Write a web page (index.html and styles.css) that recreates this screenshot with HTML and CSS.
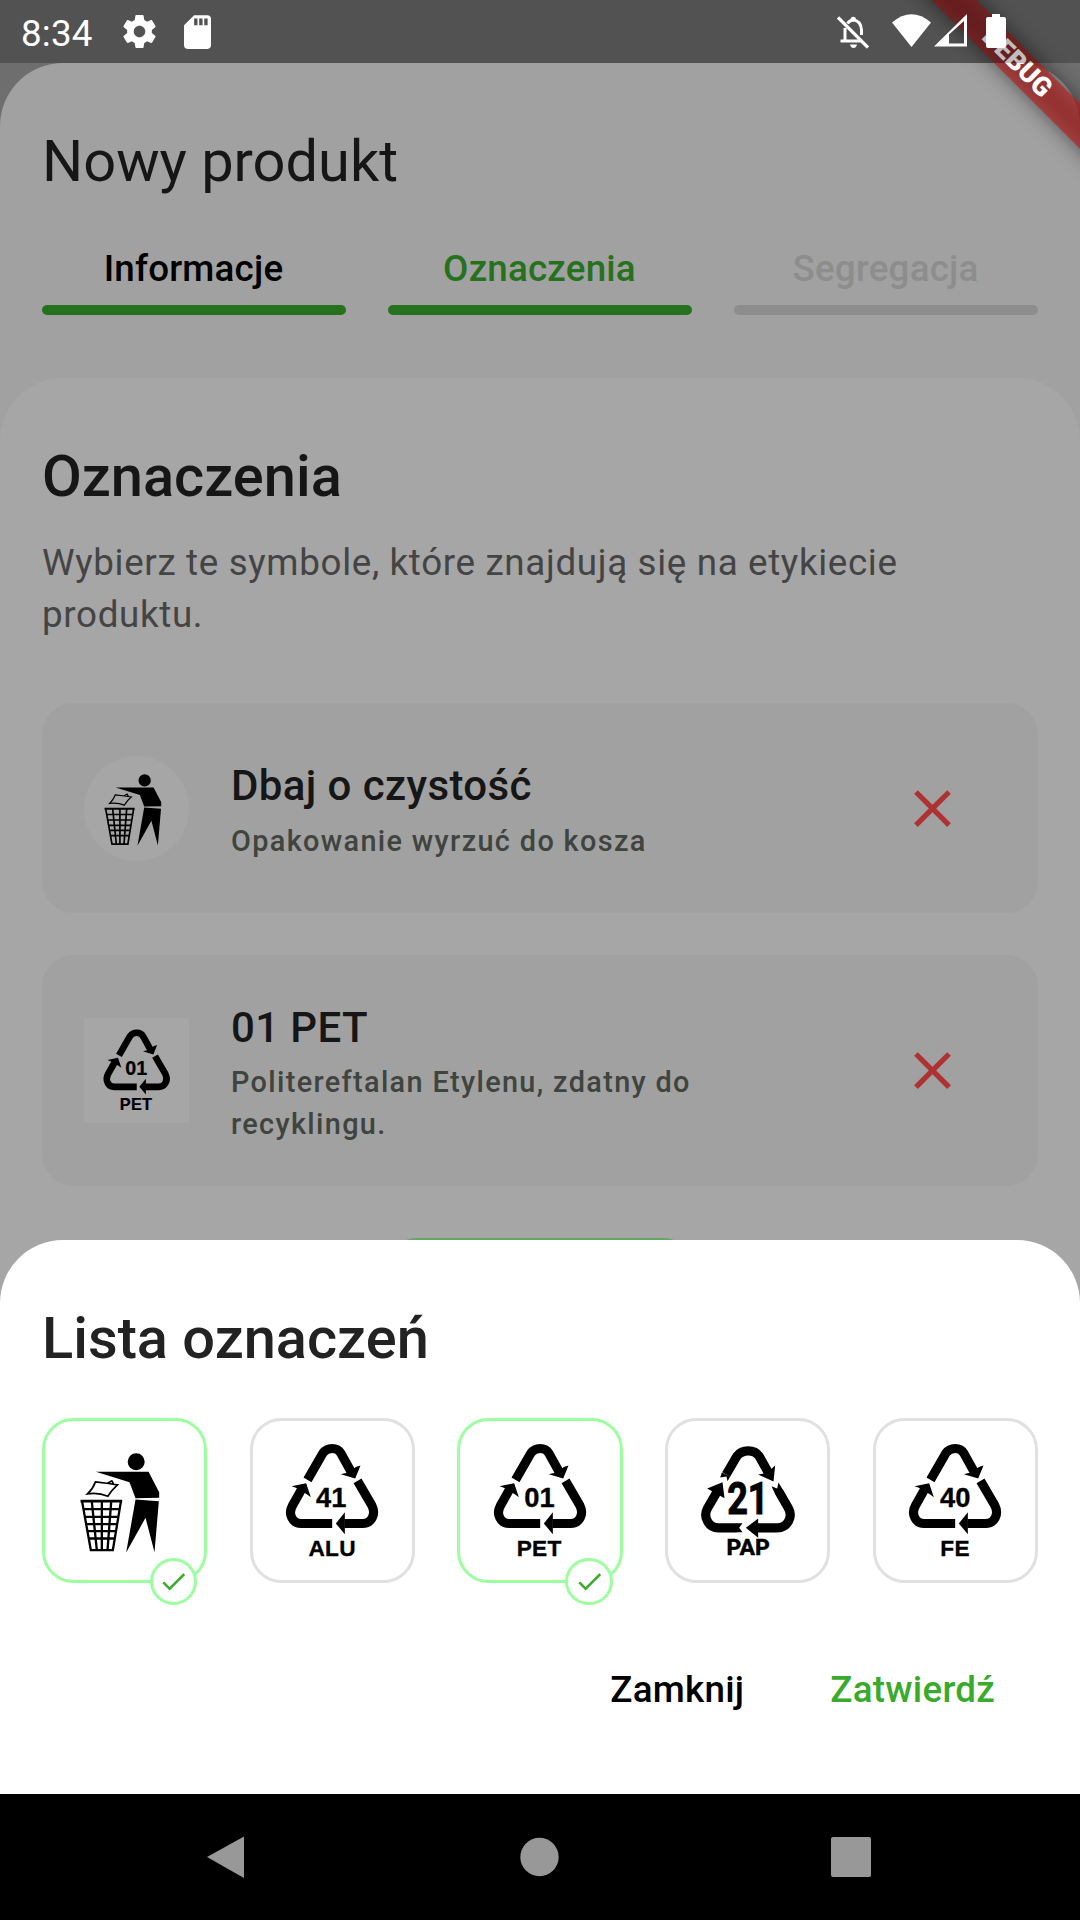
FILE: index.html
```html
<!DOCTYPE html>
<html lang="pl">
<head>
<meta charset="utf-8">
<title>Nowy produkt</title>
<link rel="stylesheet" href="styles.css">
</head>
<body>
<svg class="defs" width="0" height="0" aria-hidden="true">
  <symbol id="litter" viewBox="65.5 53.5 437 437">
    <circle cx="318" cy="155" r="25.5"/>
    <path d="M197 185H355L387 246V263L316 264L298 216Z"/>
    <path d="M316 268L386 273L373 426L346 323L288 427Z"/>
    <path d="M196 215L235 220L262 224Q246 238 233 258Q204 246 172 251Q188 236 196 215ZM232 219L245 212L250 221" fill="none" stroke="#000" stroke-width="5"/>
    <path d="M151 273H276" stroke="#000" stroke-width="8"/>
    <path d="M156 275L182 420H248L272 275M185 275L200 420M215 275V420M243 275L232 420M160 297H268M164 320H264M168 342H261M172 363H257M176 385H254" fill="none" stroke="#000" stroke-width="7"/>
  </symbol>
  <symbol id="loop" viewBox="59.5 53.5 437 437">
    <path d="M205 209L251 129Q261 115 279 115Q297 115 305 129L335 183M355 212L398 286Q408 306 399 323Q390 340 370 340H316M279 340H186Q166 340 158 323Q149 306 160 286L190 233" fill="none" stroke="#000" stroke-width="27.5"/>
    <path d="M305 192L322 188L352 170L364 166L348 205ZM290 340L317 306V372ZM157 228L201 219L215 261L203 252L170 233Z"/>
  </symbol>
  <symbol id="loop-pap" viewBox="59.5 53.5 437 437">
    <path d="M213 193L245 138Q257 122 279 122Q301 122 312 138L341 190M371 244L399 293Q411 313 400 333Q389 353 366 353H305M244 353H190Q167 353 157 333Q146 314 157 294L192 234" fill="none" stroke="#000" stroke-width="27.5"/>
    <path d="M309 193L326 190L349 176L360 166L355 214ZM272 353L309 325V383ZM156 235L202 216L208 264ZM200 187L225 199L217 213L214 199L195 202ZM349 228L366 235L370 217L384 240L360 252ZM242 339.500H262L252 353L262 366.500H242Z"/>
  </symbol>
  <symbol id="close" viewBox="0 0 24 24">
    <path d="M19 6.410L17.590 5L12 10.590L6.410 5L5 6.410L10.590 12L5 17.590L6.410 19L12 13.410L17.590 19L19 17.590L13.410 12Z"/>
  </symbol>
  <symbol id="check" viewBox="0 0 24 24">
    <path d="M9 16.170L4.830 12L3.410 13.410L9 19L21 7L19.590 5.590Z"/>
  </symbol>
</svg>

<div class="screen">
  <div class="app">
    <header class="top">
      <h1 class="title">Nowy produkt</h1>
      <nav class="steps">
        <div class="step"><span>Informacje</span><i class="step-bar"></i></div>
        <div class="step step-current"><span>Oznaczenia</span><i class="step-bar"></i></div>
        <div class="step step-off"><span>Segregacja</span><i class="step-bar"></i></div>
      </nav>
    </header>
    <main class="panel">
      <h2 class="heading">Oznaczenia</h2>
      <p class="lead">Wybierz te symbole, które znajdują się na etykiecie produktu.</p>
      <div class="marks">
        <article class="mark mark-short">
          <svg class="mark-icon mark-round"><use href="#litter"/></svg>
          <div class="mark-text"><h3>Dbaj o czystość</h3><p>Opakowanie wyrzuć do kosza</p></div>
          <div class="mark-close"><svg><use href="#close"/></svg></div>
        </article>
        <article class="mark mark-tall">
          <svg class="mark-icon" viewBox="59.5 53.5 437 437"><use href="#loop" x="59.5" y="53.5" width="437" height="437"/>
            <text class="code" x="277" y="291">01</text><text class="material" x="276" y="437">PET</text></svg>
          <div class="mark-text"><h3>01 PET</h3><p>Politereftalan Etylenu, zdatny do recyklingu.</p></div>
          <div class="mark-close"><svg><use href="#close"/></svg></div>
        </article>
      </div>
      <div class="add"></div>
    </main>
  </div>

  <section class="sheet">
    <h2 class="heading">Lista oznaczeń</h2>
    <div class="tiles">
      <div class="tile tile-on">
        <svg class="tile-icon"><use href="#litter"/></svg>
        <span class="badge"><svg><use href="#check"/></svg></span>
      </div>
      <div class="tile">
        <svg class="tile-icon" viewBox="59.5 53.5 437 437"><use href="#loop" x="59.5" y="53.5" width="437" height="437"/>
          <text class="code" x="276" y="291">41</text><text class="material" x="279" y="437">ALU</text></svg>
      </div>
      <div class="tile tile-on">
        <svg class="tile-icon" viewBox="59.5 53.5 437 437"><use href="#loop" x="59.5" y="53.5" width="437" height="437"/>
          <text class="code" x="277" y="291">01</text><text class="material" x="276" y="437">PET</text></svg>
        <span class="badge"><svg><use href="#check"/></svg></span>
      </div>
      <div class="tile">
        <svg class="tile-icon" viewBox="59.5 53.5 437 437"><use href="#loop-pap" x="59.5" y="53.5" width="437" height="437"/>
          <text class="code-pap" x="216" y="312" textLength="124" lengthAdjust="spacingAndGlyphs">21</text>
          <text class="material-pap" x="214" y="435" textLength="130" lengthAdjust="spacingAndGlyphs">PAP</text></svg>
      </div>
      <div class="tile">
        <svg class="tile-icon" viewBox="59.5 53.5 437 437"><use href="#loop" x="59.5" y="53.5" width="437" height="437"/>
          <text class="code" x="279" y="291">40</text><text class="material" x="279" y="437">FE</text></svg>
      </div>
    </div>
    <div class="actions"><span>Zamknij</span><span class="confirm">Zatwierdź</span></div>
  </section>

  <div class="ribbon"><span>DEBUG</span></div>

  <div class="status">
    <span class="clock">8:34</span>
    <svg class="gear" viewBox="2 2 20 20"><path fill="#fff" d="M19.430 12.980c.04-.32.07-.64.07-.98s-.03-.66-.07-.98l2.110-1.650c.19-.15.24-.42.12-.64l-2-3.460c-.12-.22-.39-.3-.61-.22l-2.490 1c-.52-.4-1.080-.73-1.690-.98l-.38-2.650C14.460 2.180 14.250 2 14 2h-4c-.25 0-.46.18-.49.42l-.38 2.650c-.61.25-1.170.59-1.690.98l-2.490-1c-.23-.09-.49 0-.61.22l-2 3.460c-.13.22-.07.49.12.64l2.110 1.650c-.04.32-.07.65-.07.98s.03.66.07.98l-2.110 1.650c-.19.15-.24.42-.12.64l2 3.460c.12.22.39.3.61.22l2.490-1c.52.4 1.080.73 1.690.98l.38 2.650c.03.24.24.42.49.42h4c.25 0 .46-.18.49-.42l.38-2.650c.61-.25 1.170-.59 1.690-.98l2.490 1c.23.09.49 0 .61-.22l2-3.460c.12-.22.07-.49-.12-.64l-2.110-1.650zM12 15.500c-1.930 0-3.500-1.570-3.500-3.500s1.570-3.500 3.500-3.500 3.500 1.570 3.500 3.500-1.570 3.500-3.500 3.500z"/></svg>
    <svg class="sd" viewBox="4 2 16 20"><path fill="#fff" d="M18 2h-8L4.020 8 4 20c0 1.100.9 2 2 2h12c1.100 0 2-.9 2-2V4c0-1.100-.9-2-2-2zm-6 6h-2V4h2v4zm3 0h-2V4h2v4zm3 0h-2V4h2v4z"/></svg>
    <svg class="bell" viewBox="0 0 32 34">
      <path d="M8 26V13M10.500 8.500Q13 5 16.500 5Q24 6 24.500 15V20M3.500 26H24" fill="none" stroke="#fff" stroke-width="3"/>
      <path d="M13.500 4A2.800 2.800 0 0 1 19 4V6H13.500ZM13 29.500H20Q19 33 16.500 33Q14 33 13 29.500Z" fill="#fff"/>
      <path d="M1 2.500L31 32.500" stroke="#fff" stroke-width="3.200"/>
    </svg>
    <svg class="wifi" viewBox="0 0 39 33"><path fill="#fff" d="M0 8.500Q19.500-8 39 8.500L19.500 33Z"/></svg>
    <svg class="cell" viewBox="0 0 33 33"><path fill="#fff" fill-rule="evenodd" d="M0 32.500L33 0V32.500ZM15 20.500V29.500H30V7Z"/></svg>
    <svg class="battery" viewBox="0 0 20 34"><path fill="#fff" d="M6 0H14V3H18Q20 3 20 5V32Q20 34 18 34H2Q0 34 0 32V5Q0 3 2 3H6Z"/></svg>
  </div>
</div>

<footer class="navbar">
  <svg viewBox="0 0 40 44"><path d="M38 1.500V43L1 22Z"/></svg>
  <svg viewBox="0 0 40 44"><circle cx="20.5" cy="22" r="19.2"/></svg>
  <svg viewBox="0 0 40 44"><rect y="2" width="40" height="40" rx="2"/></svg>
</footer>
</body>
</html>
```
FILE: styles.css
```css
* { box-sizing: border-box; margin: 0; padding: 0; }

body {
  width: 1080px;
  height: 1920px;
  overflow: hidden;
  display: flex;
  flex-direction: column;
  background: #000;
  font-family: Roboto, "Noto Sans", sans-serif;
}

svg { display: block; }
.defs { position: absolute; }

.screen {
  position: relative;
  flex: none;
  height: 1794px;
  padding-top: 63px;
  overflow: hidden;
  background: #6e6e6e;
}

/* Page behind the bottom sheet, in its dimmed colours */
.app {
  display: flex;
  flex-direction: column;
  height: 1731px;
  border-radius: 63px 63px 0 0;
  background: #a1a1a1;
}
.top { padding: 64px 42px 62.500px; }
.title {
  font-size: 57.750px;
  line-height: 68px;
  font-weight: 400;
  color: #161616;
}
.steps {
  display: grid;
  grid-template-columns: repeat(3, 1fr);
  gap: 42px;
  margin-top: 52px;
}
.step {
  display: flex;
  flex-direction: column;
  gap: 13.500px;
  text-align: center;
  font-size: 36.750px;
  line-height: 44px;
  font-weight: 500;
  letter-spacing: .2px;
  color: #000;
}
.step span { margin-right: 1px; }
.step-bar { height: 10.500px; border-radius: 6px; background: #26711e; }
.step-current { color: #26711e; }
.step-off { color: #8d8d8d; }
.step-off .step-bar { background: #8d8d8d; }

.panel {
  flex: 1;
  padding: 64px 42px 0;
  border-radius: 63px 63px 0 0;
  background: #a6a6a6;
}
.heading {
  font-size: 57.750px;
  line-height: 68px;
  font-weight: 500;
  color: #222;
}
.panel .heading { color: #161616; }
.lead {
  margin-top: 27px;
  font-size: 36.750px;
  line-height: 52.500px;
  letter-spacing: .656px;
  color: #444;
}
.marks {
  display: flex;
  flex-direction: column;
  gap: 42px;
  margin-top: 61.500px;
}
.mark {
  display: flex;
  align-items: center;
  gap: 42px;
  padding: 1.500px 42px 0;
  border-radius: 31.500px;
  background: #a1a1a1;
}
.mark-short { height: 209.500px; }
.mark-tall { height: 231px; }
.mark-icon { flex: none; width: 105px; height: 105px; background: #a6a6a6; }
.mark-round { border-radius: 50%; }
.mark-text { flex: 1; padding-top: 6px; }
.mark-text h3 {
  font-size: 42px;
  line-height: 50px;
  font-weight: 500;
  letter-spacing: .39px;
  color: #161616;
}
.mark-text p {
  margin-top: 8.500px;
  font-size: 28.875px;
  line-height: 42px;
  font-weight: 500;
  letter-spacing: 1.340px;
  color: #3f443e;
}
.mark-close { display: flex; justify-content: center; width: 126px; padding-right: 1px; }
.mark-close svg { width: 63px; height: 63px; fill: #ae3232; }
.add {
  width: 300px;
  height: 105px;
  margin: 52.500px auto 0;
  border-radius: 26px;
  background: #62a668;
}

.code, .material {
  font-family: "Liberation Sans", Arial, sans-serif;
  font-weight: 700;
  text-anchor: middle;
  stroke: #000;
  stroke-width: 1px;
}
.code { font-size: 82px; }
.material { font-size: 68px; letter-spacing: 1px; }
.code-pap { font-weight: 700; font-size: 135px; stroke: #000; stroke-width: 3px; }
.material-pap { font-weight: 800; font-size: 66px; stroke: #000; stroke-width: 1px; }

.sheet {
  position: absolute;
  left: 0;
  right: 0;
  top: 1240px;
  bottom: 0;
  padding: 64px 42px 0;
  border-radius: 63px 63px 0 0;
  background: #fff;
}
.tiles { display: flex; justify-content: space-between; margin-top: 46px; }
.tile {
  position: relative;
  display: flex;
  align-items: center;
  justify-content: center;
  width: 165.400px;
  height: 165.400px;
  border: 3px solid #e0e0e0;
  border-radius: 31.500px;
}
.tile-on { border-color: #9bff9f; }
.tile-icon { flex: none; width: 145.700px; height: 145.700px; }
.badge {
  position: absolute;
  right: 7px;
  bottom: -25px;
  display: flex;
  align-items: center;
  justify-content: center;
  width: 47.250px;
  height: 47.250px;
  border: 3px solid #9bff9f;
  border-radius: 50%;
  background: #fff;
}
.badge svg { width: 31px; height: 31px; fill: #3aaa2c; }
.actions {
  display: flex;
  justify-content: flex-end;
  gap: 86px;
  margin-top: 84.500px;
  padding-right: 43px;
  font-size: 36.750px;
  line-height: 44px;
  font-weight: 500;
  letter-spacing: .26px;
  color: #000;
}
.confirm { color: #3aaa2c; }

/* Corner ribbon */
.ribbon {
  position: absolute;
  left: 807px;
  top: 47.250px;
  width: 420px;
  height: 31.500px;
  transform: rotate(45deg);
  text-align: center;
  color: #fff;
  font-size: 26.800px;
  line-height: 31.500px;
  font-weight: 900;
}
.ribbon::before,
.ribbon::after {
  content: "";
  position: absolute;
  inset: 0;
  z-index: -1;
}
.ribbon::before { background: rgba(0, 0, 0, .5); filter: blur(10.400px); }
.ribbon::after { background: rgba(183, 28, 28, .63); }

.status {
  position: absolute;
  inset: 0 0 auto;
  display: flex;
  align-items: flex-start;
  height: 63px;
  padding: 14px 74px 0 21px;
  background: rgba(0, 0, 0, .25);
}
.clock { width: 102px; padding-top: 1px; font-size: 36.750px; line-height: 38px; letter-spacing: .2px; color: #fff; }
.gear { width: 33px; height: 35px; }
.sd { width: 27px; height: 34px; margin: 1px 0 0 28px; }
.bell { width: 32px; height: 34px; margin: 1px 0 0 auto; }
.wifi { width: 39px; height: 33px; margin-left: 23px; }
.cell { width: 33px; height: 33px; margin: 0 0 0 3px; }
.battery { width: 20px; height: 34px; margin-left: 19px; }

.navbar {
  display: flex;
  align-items: center;
  justify-content: space-between;
  height: 126px;
  padding: 0 209px 0 206px;
}
.navbar svg { width: 40px; height: 44px; fill: #989898; }
```
